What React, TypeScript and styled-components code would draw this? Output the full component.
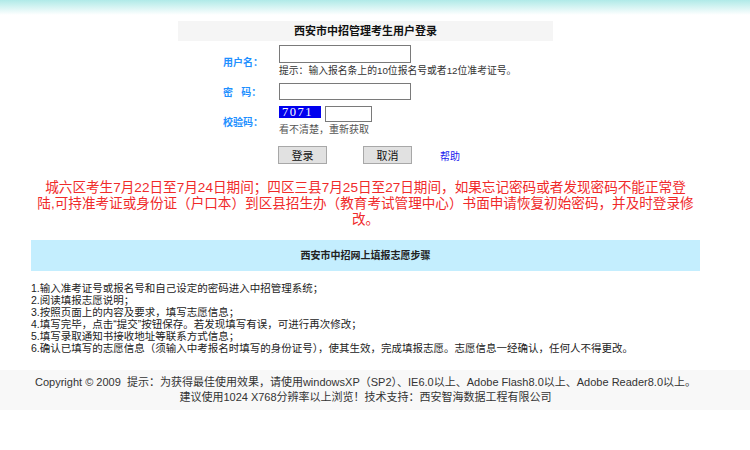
import styled, { createGlobalStyle } from "styled-components";

// 页面基础样式
const GlobalStyle = createGlobalStyle`
  html, body {
    margin: 0;
    padding: 0;
    background: #fff;
    font-family: "Liberation Sans", "Noto Sans CJK SC", sans-serif;
    color: #222;
  }
`;

const steps = [
  "1.输入准考证号或报名号和自己设定的密码进入中招管理系统；",
  "2.阅读填报志愿说明；",
  "3.按照页面上的内容及要求，填写志愿信息；",
  "4.填写完毕，点击“提交”按钮保存。若发现填写有误，可进行再次修改；",
  "5.填写录取通知书接收地址等联系方式信息；",
  "6.确认已填写的志愿信息（须输入中考报名时填写的身份证号），使其生效，完成填报志愿。志愿信息一经确认，任何人不得更改。",
];

const App: React.FC = () => {
  return (
    <>
      <GlobalStyle />
      <TopBand />
      <Page>
        <LoginBox>
          <LoginTitle>西安市中招管理考生用户登录</LoginTitle>
          <FormGrid>
            <Label>用户名：</Label>
            <Field>
              <TextInput width={132} height={18} />
              <Hint>提示：输入报名条上的10位报名号或者12位准考证号。</Hint>
            </Field>

            <Label>密&nbsp;&nbsp;&nbsp;码：</Label>
            <Field>
              <TextInput width={132} height={17} type="password" />
            </Field>

            <Label>校验码：</Label>
            <Field>
              <CaptchaRow>
                <Captcha>7071</Captcha>
                <TextInput width={47} height={16} />
              </CaptchaRow>
              <Refresh>看不清楚，重新获取</Refresh>
            </Field>
          </FormGrid>

          <ButtonRow>
            <GrayButton>登录</GrayButton>
            <GrayButton>取消</GrayButton>
            <HelpLink>帮助</HelpLink>
          </ButtonRow>
        </LoginBox>

        <Notice>
          城六区考生7月22日至7月24日期间；四区三县7月25日至27日期间，如果忘记密码或者发现密码不能正常登
          <br />
          陆,可持准考证或身份证（户口本）到区县招生办（教育考试管理中心）书面申请恢复初始密码，并及时登录修
          <br />
          改。
        </Notice>

        <StepsBar>西安市中招网上填报志愿步骤</StepsBar>
        <StepList>
          {steps.map((s) => (
            <li key={s}>{s}</li>
          ))}
        </StepList>
      </Page>

      <Footer>
        <FooterInner>
          <div>Copyright © 2009&nbsp; 提示：为获得最佳使用效果，请使用windowsXP（SP2）、IE6.0以上、Adobe Flash8.0以上、Adobe Reader8.0以上。</div>
          <div>建议使用1024 X768分辨率以上浏览！技术支持：西安智海数据工程有限公司</div>
        </FooterInner>
      </Footer>
    </>
  );
};

const TopBand = styled.div`
  height: 15px;
  background: linear-gradient(#b0eae8, #ffffff);
`;

const Page = styled.div`
  width: 731px;
`;

const LoginBox = styled.div`
  width: 375px;
  margin: 6px auto 0;
`;

const LoginTitle = styled.div`
  height: 20px;
  line-height: 20px;
  background: #f5f5f5;
  text-align: center;
  font-size: 11px;
  font-weight: bold;
  color: #111;
`;

const FormGrid = styled.div`
  display: grid;
  grid-template-columns: 101px 1fr;
  row-gap: 6px;
  margin-top: 4px;
  align-items: center;
`;

const Label = styled.div`
  font-size: 10px;
  font-weight: bold;
  color: #1e90ff;
  padding-left: 45px;
  white-space: nowrap;
`;

const Field = styled.div`
  display: flex;
  flex-direction: column;
  align-items: flex-start;
`;

const TextInput = styled.input<{ width: number; height: number }>`
  box-sizing: border-box;
  width: ${(p) => p.width}px;
  height: ${(p) => p.height}px;
  margin: 0;
  padding: 0 2px;
  border: 1px solid #7a7a7a;
  background: #fff;
  outline: none;
`;

const Hint = styled.div`
  margin-top: 1px;
  font-size: 9.8px;
  line-height: 13px;
  color: #333;
  white-space: nowrap;
`;

const CaptchaRow = styled.div`
  display: flex;
  align-items: flex-start;
  gap: 4px;
`;

const Captcha = styled.div`
  width: 42px;
  height: 12px;
  line-height: 12px;
  background: #0000ee;
  color: #fff;
  font-family: "Liberation Serif", serif;
  font-size: 12.5px;
  letter-spacing: 1.5px;
  padding-left: 3px;
  box-sizing: border-box;
`;

const Refresh = styled.div`
  margin-top: 1px;
  font-size: 10px;
  line-height: 13px;
  color: #555;
`;

const ButtonRow = styled.div`
  display: flex;
  align-items: center;
  margin: 10px 0 0 100px;
`;

const GrayButton = styled.button`
  width: 49px;
  height: 18px;
  margin-right: 36px;
  padding: 0;
  border: 1px solid #a8a8a8;
  background: #e1e1e1;
  font-family: "Noto Sans CJK SC", sans-serif;
  font-size: 11px;
  line-height: 16px;
  color: #111;
`;

const HelpLink = styled.a`
  margin-left: -8px;
  font-size: 10px;
  color: #1a1aee;
  cursor: pointer;
`;

const Notice = styled.p`
  margin: 16px 0 0;
  text-align: center;
  font-size: 13.6px;
  line-height: 16px;
  color: #f02a2a;
  white-space: nowrap;
`;

const StepsBar = styled.div`
  height: 31px;
  line-height: 31px;
  margin: 12px 31px 0;
  background: #c4eefe;
  text-align: center;
  font-size: 10px;
  font-weight: bold;
  color: #222;
`;

const StepList = styled.ul`
  list-style: none;
  margin: 11px 0 0;
  padding: 0 0 0 31px;
  font-size: 10.5px;
  line-height: 12px;
  color: #222;
`;

const Footer = styled.div`
  margin-top: 16px;
  padding: 5px 0 5px;
  background: #f8f8f8;
`;

const FooterInner = styled.div`
  width: 731px;
  text-align: center;
  font-size: 11px;
  line-height: 15px;
  color: #333;
`;

export default App;
